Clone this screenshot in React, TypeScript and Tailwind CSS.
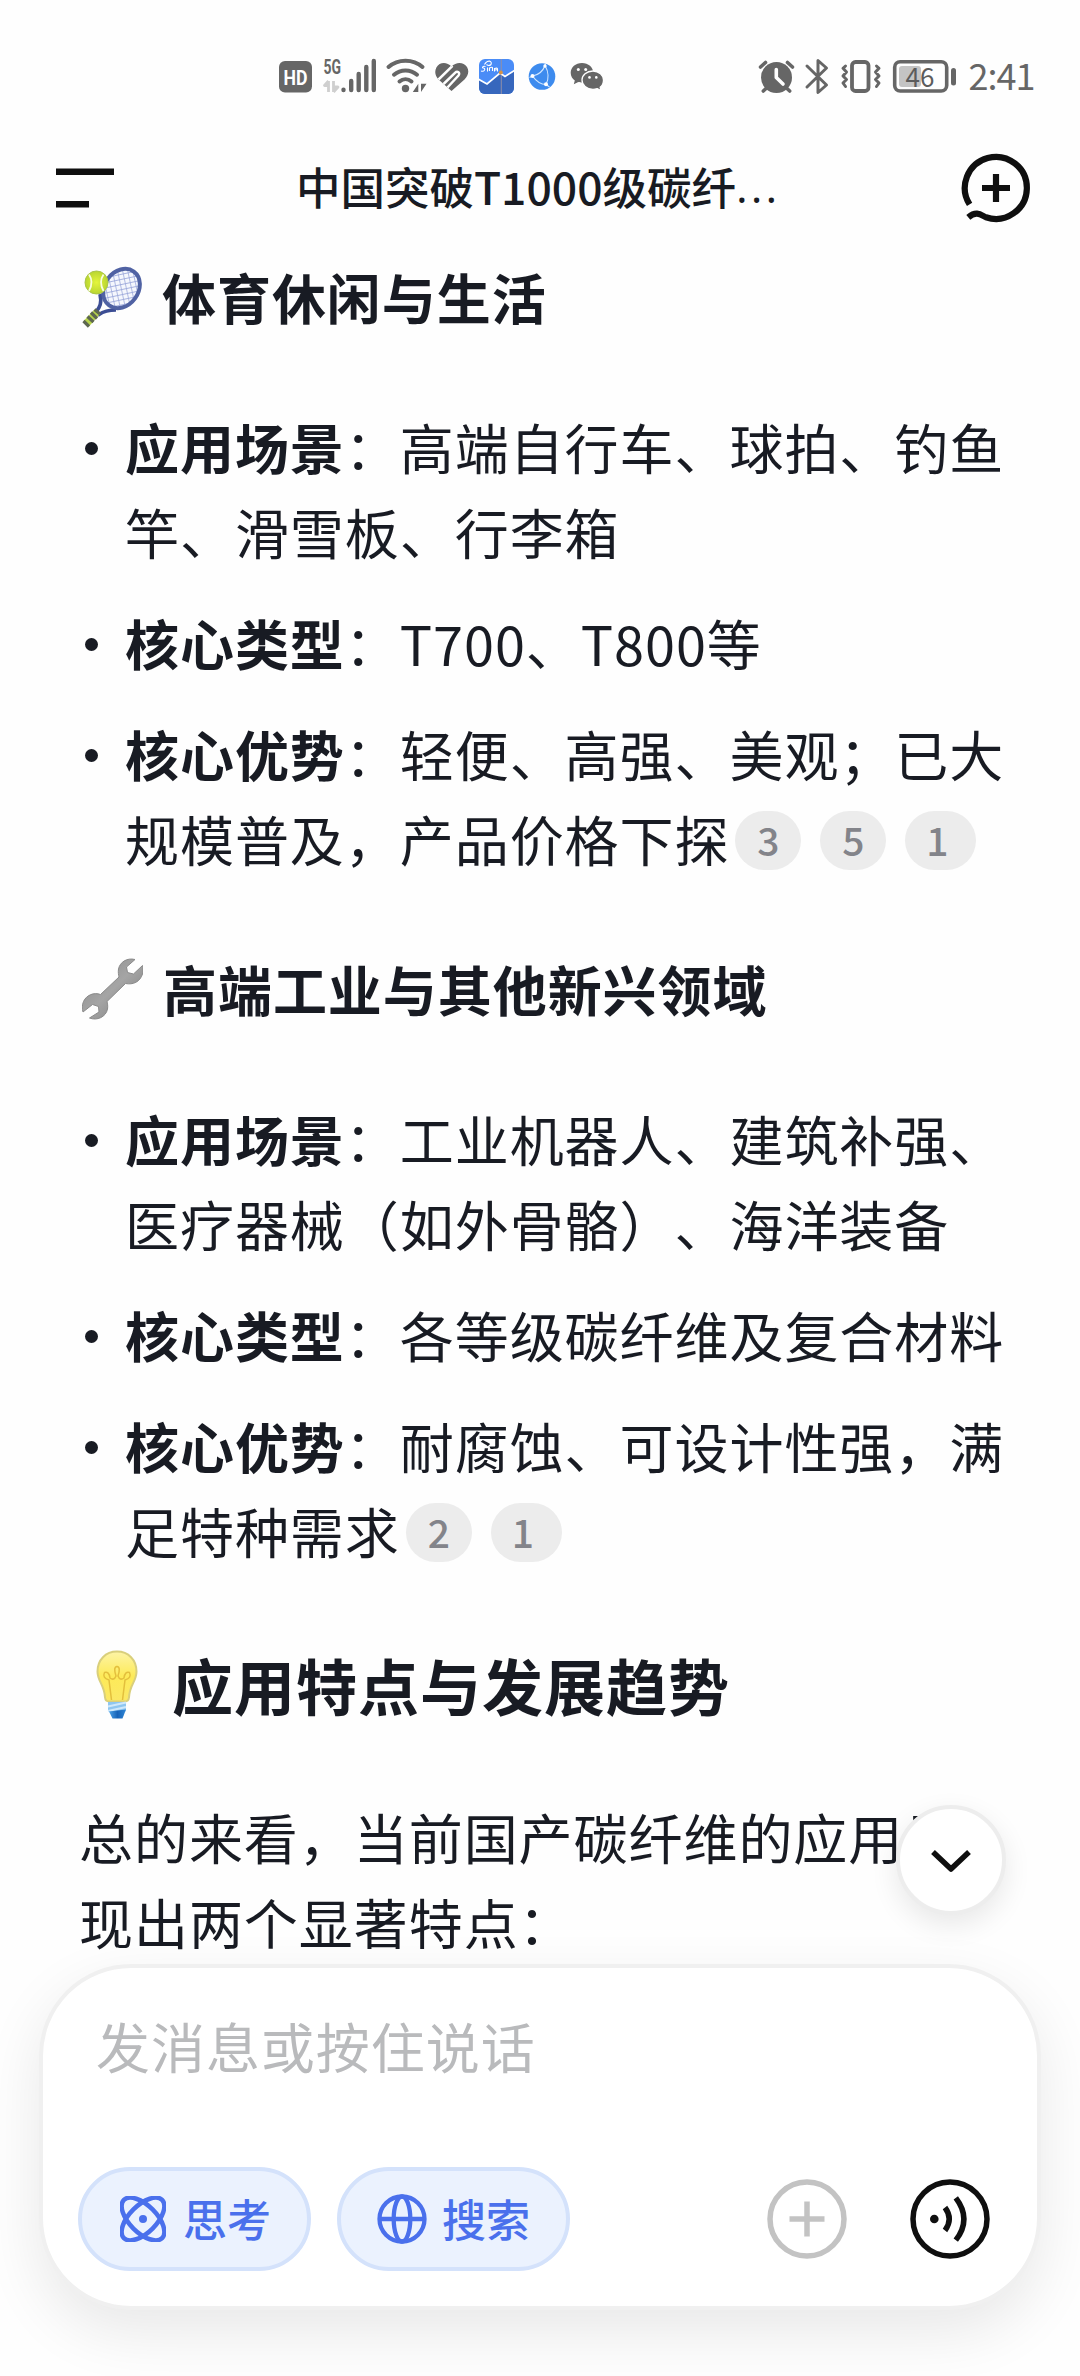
import type { ReactNode } from "react";

const G = "#666666";

function StatusBar() {
  return (
    <div className="flex h-[100px] shrink-0 items-start pt-[56px]">
      <svg className="ml-[276px] h-[42px] w-[340px] shrink-0 overflow-visible" viewBox="276 56 340 42" fill="none">
        {/* HD badge */}
        <rect x="279" y="61" width="33" height="31.5" rx="6" fill={G} />
        <text x="295.5" y="84.5" textAnchor="middle" fontSize="20.5" fontWeight="700" fill="#fff" textLength="24" lengthAdjust="spacingAndGlyphs" className="font-['Roboto',sans-serif]">HD</text>
        {/* mobile network */}
        <text x="323.500" y="74" fontSize="20.500" fontWeight="700" fill={G} textLength="17.500" lengthAdjust="spacingAndGlyphs" className="font-['Roboto',sans-serif]">5G</text>
        <path d="M328.500 81v11M328.500 81l-4 4.500h4M333.500 92V81M333.500 92l4.500-5h-4.500" stroke="#cfcfcf" strokeWidth="2.800" strokeLinejoin="round" fill="#cfcfcf" />
        <g stroke={G} strokeWidth="4.400" strokeLinecap="round">
          <path d="M343.500 89.800v.2M351.200 81v9M358.700 74v16M366.300 67v23M373.800 61v29" />
        </g>
        {/* wifi */}
        <g stroke={G} strokeWidth="4" strokeLinecap="round">
          <path d="M388.500 67C398 58.500 413 58.500 422.500 67" />
          <path d="M394 74.700C400.500 69 410.500 69 417 74.700" />
          <path d="M399.500 81.500C403 78.500 408 78.500 411.500 81.500" />
        </g>
        <circle cx="405.500" cy="88.500" r="3.700" fill={G} />
        <path d="M418.300 83.800V92H412.800ZM421 92V83.800H426.500Z" fill={G} />
        {/* health heart */}
        <clipPath id="heart">
          <path d="M451.500 66.500C447 61.500 439.500 61.800 436.500 67.200C434 72 435.500 76.200 438.500 79.500L451.500 91L464.500 79.500C468.500 75.500 469.300 71 467 67C463.500 61.500 456 61.700 451.500 66.500Z" />
        </clipPath>
        <g clipPath="url(#heart)">
          <path d="M430 58H474V96H430Z" fill={G} />
          <path d="M436.500 81.500L452.500 65.800M441.500 86L455 72.800C457.500 70.500 460.500 73 458.500 75.500L447 88" stroke="#fff" strokeWidth="2.500" />
        </g>
        {/* finance app */}
        <clipPath id="fin"><rect x="479" y="59" width="35" height="35" rx="6" /></clipPath>
        <g clipPath="url(#fin)">
          <path d="M479 59h35v35h-35z" fill="#4a8cf7" />
          <path d="M479 79.500L487 84L500 73L505 76.500L514 70V94H479Z" fill="#3767bd" />
          <path d="M501.300 59V94" stroke="#8f8fa8" strokeWidth="1" />
          <path d="M478 79L487 84L500 73L505 76.500L515 70" stroke="#fff" strokeWidth="1.700" />
          <circle cx="500.800" cy="72.500" r="2" fill="#d89445" />
          <path d="M485.500 66.500q-3-.8-3 1.300q3 .500 2 2.500q-1 1.500-3.500.7M487.500 67.500v4M489.500 71v-3q3-1.500 3 0v3M494.500 71.500v-3q3-1 3 .5v2.500M497.500 69.500q-3 0-2.800 1.500M484.500 64.500q2-3.500 5-3.500q2.500 1 1.500 3.500q-2 2-4.500 0" stroke="#fff" strokeWidth="1.100" />
        </g>
        {/* browser */}
        <circle cx="542" cy="76.500" r="13.300" fill="#3d8bee" />
        <g stroke="#cfe6ff" strokeWidth="1.200">
          <path d="M532.500 76C538 75 543 71 545 65.500M532.500 76C536 81 541 84.500 546 84.500M545 65.500C548.500 71.500 549 79 546 84.500M529.500 77.500l3-1.500M545 65.500l.5-2M546 84.500l3.500 2.500" />
        </g>
        <g fill="#fff"><circle cx="532.500" cy="76" r="2" /><circle cx="545" cy="66" r="1.700" /><circle cx="546" cy="84.200" r="2" /></g>
        {/* messenger */}
        <path d="M582 63C575.500 63 570.700 67.300 570.700 72.800C570.700 76 572.300 78.700 574.800 80.500L573.800 84.300L578.300 82C579.700 82.300 580.800 82.500 582.500 82.500C588.500 82.300 593.300 78.200 593.300 72.800C593.300 67.300 588.300 63 582 63Z" fill={G} />
        <path d="M593 71C586.500 71 582 75.300 582 80C582 85 586.500 89.300 593 89.300C594.500 89.300 596 89 597.300 88.600L601 90.500L600.200 87.200C602.500 85.500 603.500 82.800 603.500 80C603.500 75.200 599 71 593 71Z" fill={G} stroke="#fff" strokeWidth="1.300" />
        <g fill="#fff"><circle cx="578.300" cy="69.600" r="1.500" /><circle cx="585.700" cy="69.600" r="1.500" /><circle cx="589.500" cy="77.400" r="1.300" /><circle cx="596.300" cy="77.400" r="1.300" /></g>
      </svg>
      <svg className="ml-[137px] h-[42px] w-[300px] shrink-0 overflow-visible" viewBox="752 56 300 42" fill="none">
        {/* alarm */}
        <circle cx="775.500" cy="77.500" r="15.500" fill={G} />
        <path d="M759.500 67L764.500 62.500M791.500 67L786.500 62.500M765 88.500L762.300 91M786 88.500L788.700 91" stroke={G} strokeWidth="3.600" strokeLinecap="round" />
        <path d="M775.300 69.500V77.500L782 84" stroke="#fff" strokeWidth="3.600" strokeLinecap="round" strokeLinejoin="round" />
        {/* bluetooth */}
        <path d="M806 66L825.500 85L817 92.500V60.500L825.500 68L806 87" stroke={G} strokeWidth="3" strokeLinejoin="round" strokeLinecap="round" />
        {/* vibrate */}
        <rect x="851" y="62" width="16.500" height="29" rx="3.500" stroke={G} strokeWidth="3.800" />
        <path d="M844.500 66L842 68.300L845.500 72L842 76L845.500 79.500L842 83L844.500 86.500M875.500 66L878 68.300L874.500 72L878 76L874.500 79.500L878 83L875.500 86.500" stroke={G} strokeWidth="3" strokeLinejoin="round" strokeLinecap="round" />
        {/* battery */}
        <rect x="893.700" y="61.700" width="52" height="29.300" rx="5.500" stroke={G} strokeWidth="3.600" />
        <rect x="898" y="66" width="22" height="21" rx="3" fill="#c4c4c4" />
        <text x="919" y="86.500" textAnchor="middle" fontSize="26" fill="#5c5c5c" className="font-['Noto_Sans_CJK_SC',sans-serif]">46</text>
        <rect x="950" y="68" width="5" height="17.500" rx="2.500" fill={G} />
        <text x="967.500" y="90" fontSize="36" fill={G} textLength="67" lengthAdjust="spacing" className="font-['Noto_Sans_CJK_SC',sans-serif]">2:41</text>
      </svg>
    </div>
  );
}

function Header() {
  return (
    <header className="flex h-[130px] shrink-0 items-start justify-between pl-[56px] pr-[50px] pt-[54px]">
      <svg className="mt-[14px] h-[40px] w-[58px]" viewBox="0 0 58 40" fill="#0f0f0f">
        <path d="M0 0.500H58V7H0ZM0 33H33V39.500H0Z" />
      </svg>
      <h1 className="mt-[-2px] flex h-[68px] items-center text-[44.500px] font-medium leading-[68px] text-[#181b23]">
        <span>中国突破T1000级碳纤</span>
        <span className="font-['Open_Sans','Noto_Sans',sans-serif] tracking-[3px]">...</span>
      </h1>
      <svg className="h-[70px] w-[68px] overflow-visible" viewBox="962 154 68 70" fill="none" stroke="#0f0f0f" strokeWidth="6.200">
        <path d="M969.600 204.400A31 31 0 1 1 986 217.300C981 215 976.500 210.500 968.300 217.300" />
        <path d="M982 188H1010M996 174V202" />
      </svg>
    </header>
  );
}

function Racket() {
  return (
    <svg className="h-[62px] w-[60px] shrink-0" viewBox="0 0 60 62" fill="none">
      <defs>
        <pattern id="net" width="5" height="5" patternUnits="userSpaceOnUse" patternTransform="rotate(42)">
          <path d="M0 0H5V5H0Z" fill="#f5f7fd" />
          <path d="M0 0H5M0 0V5" stroke="#9aa6da" strokeWidth="1.700" />
        </pattern>
        <radialGradient id="ball"><stop stopColor="#e4f53c" /><stop offset="1" stopColor="#b9d531" /></radialGradient>
      </defs>
      <path d="M18 28C20 37 18 41 14 46L17 48.500C22 45 27 44 34 44" stroke="#3b4d94" strokeWidth="3.600" />
      <ellipse cx="39.500" cy="22.500" rx="16.800" ry="21" transform="rotate(36 39.500 22.500)" fill="url(#net)" stroke="#5062a3" strokeWidth="4" />
      <path d="M1.500 55L12.500 43.500L18 48L7 60.500Z" fill="#b7d44c" />
      <path d="M1.500 55L7 60.500M5.500 50.500L11.500 56M9 46.500L15 52.500M12.500 43.500L18 48" stroke="#5d6650" strokeWidth="3.200" />
      <circle cx="14.500" cy="16.500" r="11.500" fill="url(#ball)" stroke="#aac44a" strokeWidth="1" />
      <path d="M7 8.500Q12 16 7 25M21.500 8.500Q16.500 16 21.500 25" stroke="#f8fde0" strokeWidth="1.800" />
    </svg>
  );
}

function Wrench() {
  return (
    <svg className="h-[62px] w-[61px] shrink-0" viewBox="0 0 61 62">
      <defs><linearGradient id="steel" x1="0" y1="0" x2="1" y2="1"><stop stopColor="#858585" /><stop offset=".5" stopColor="#a5a5a5" /><stop offset="1" stopColor="#777" /></linearGradient></defs>
      <path d="M53 1.500C45 -.5 38 4 36.500 11C36 14 36.500 17 37 19L18.500 36.500C12 34 4.500 37 1.500 43.500C0 47 0 51 1 54L10.500 46.500L16.500 48.500L17 54L7.500 60C15 63 24 59 25.500 51C26 48 25.500 45.500 25 43.500L43.500 25.500C51 27 58 24 60.500 16C61.500 12.500 61 9.500 60.500 7.500L51.500 16L45.500 14.500L44.500 9Z" fill="url(#steel)" stroke="#8a8a8a" strokeWidth="1" strokeLinejoin="round" />
    </svg>
  );
}

function Bulb() {
  return (
    <svg className="h-[70px] w-[42px] shrink-0" viewBox="0 0 42 70" fill="none">
      <defs>
        <linearGradient id="glass" x1="0" y1="0" x2="0" y2="1"><stop stopColor="#fdf4a6" /><stop offset=".5" stopColor="#fdea58" /><stop offset="1" stopColor="#fbe866" /></linearGradient>
        <linearGradient id="cap" x1="0" y1="0" x2="1" y2="0"><stop stopColor="#4aa0e6" /><stop offset=".5" stopColor="#1763b8" /><stop offset="1" stopColor="#2f86d6" /></linearGradient>
      </defs>
      <path d="M21 1.500C9.500 1.500 1.500 10 1.500 21.500C1.500 31.500 8.500 35 9 47.500Q9.500 51.500 13 51.500H29Q32.500 51.500 33 47.500C33.500 35 40.500 31.500 40.500 21.500C40.500 10 32.500 1.500 21 1.500Z" fill="url(#glass)" stroke="#d9cf7c" strokeWidth="2" />
      <path d="M15.500 50L13 30Q6 28 8.500 22.500Q13 21 14 28Q18 31 20 26Q17 17 21 16.500Q25 17 22 26Q24 31 28 28Q29 21 33.500 22.500Q36 28 29 30L26.500 50" stroke="#e3bf3c" strokeWidth="1.500" />
      <path d="M12 52H30V59.500L29 62H13L12 59.500Z" fill="#8fc6f0" />
      <path d="M12 56.500L30 52.500M12 61L30 57" stroke="#cfe8fb" strokeWidth="2" />
      <path d="M13 61.500L30 59.500L26.500 68.500H16.500Z" fill="url(#cap)" />
    </svg>
  );
}

function Cite({ n, wide }: { n: number; wide?: boolean }) {
  return (
    <span className={`${wide ? "w-[71px] pr-[7px]" : "w-[66px]"} inline-flex h-[59px] items-center justify-center rounded-full bg-[#ececec] text-[39px] font-medium leading-[59px] tracking-normal text-[#83848a]`}>
      <span className="relative top-[-1px]">{n}</span>
    </span>
  );
}

function Cites({ ids }: { ids: number[] }) {
  return (
    <span className="ml-[6px] inline-flex h-[59px] gap-[19px] align-[5px]">
      {ids.map((n, i) => <Cite key={n} n={n} wide={i === ids.length - 1} />)}
    </span>
  );
}

function Item({ label, children }: { label: string; children: ReactNode }) {
  return (
    <li className="flex">
      <span className="ml-[6px] mt-[38px] h-[13px] w-[13px] shrink-0 rounded-full bg-[#181b23]" />
      <p className="ml-[27px] flex-1"><b className="font-bold">{label}</b>：{children}</p>
    </li>
  );
}

function SubHeading({ icon, children }: { icon: ReactNode; children: ReactNode }) {
  return (
    <h3 className="flex h-[85px] items-center pl-[3px] font-bold">
      {icon}
      <span className="ml-[20px]">{children}</span>
    </h3>
  );
}

function Composer() {
  return (
    <section className="absolute left-[39px] top-[1964px] flex h-[346px] w-[1002px] flex-col rounded-[92px] border-4 border-[#f0f0f0] bg-white bg-clip-padding shadow-[0_22px_60px_rgba(0,0,0,0.09)]">
      <p className="ml-[53px] mt-[35px] h-[85px] text-[54px] leading-[85px] tracking-[0.95px] text-[#b9babc]">发消息或按住说话</p>
      <div className="mt-[79px] flex items-center pl-[35px]">
        <button className="flex h-[104px] w-[233px] items-center rounded-full border-4 border-[#d4e2fb] bg-[#ebf2fe] pl-[38px] text-[44px] font-medium leading-[60px] text-[#4a70ec]">
          <svg className="h-[46px] w-[46px]" viewBox="0 0 46 46" fill="none" stroke="#4a70ec" strokeWidth="4.500">
            <ellipse cx="23" cy="23" rx="27" ry="13.500" transform="rotate(45 23 23)" />
            <ellipse cx="23" cy="23" rx="27" ry="13.500" transform="rotate(-45 23 23)" />
            <circle cx="23" cy="23" r="4" fill="#4a70ec" stroke="none" />
          </svg>
          <span className="relative top-[-1px] ml-[17px]">思考</span>
        </button>
        <button className="ml-[26px] flex h-[104px] w-[233px] items-center rounded-full border-4 border-[#d4e2fb] bg-[#ebf2fe] pl-[36px] text-[44px] font-medium leading-[60px] text-[#4a70ec]">
          <svg className="h-[50px] w-[50px]" viewBox="0 0 50 50" fill="none" stroke="#4a70ec" strokeWidth="4.300">
            <circle cx="25" cy="25" r="22.500" />
            <ellipse cx="25" cy="25" rx="8.300" ry="22.500" />
            <path d="M2.500 25H47.500" />
          </svg>
          <span className="relative top-[-1px] ml-[15px]">搜索</span>
        </button>
        <svg className="ml-[197px] h-[80px] w-[80px]" viewBox="0 0 80 80" fill="none" stroke="#c3c3c3" strokeWidth="5.500">
          <circle cx="40" cy="40" r="37" />
          <path d="M22.500 40H57.500M40 22.500V57.500" />
        </svg>
        <svg className="ml-[63px] h-[80px] w-[80px]" viewBox="0 0 80 80" fill="none" stroke="#0f0f0f" strokeWidth="5.500">
          <circle cx="40" cy="40" r="37" />
          <circle cx="24.300" cy="40" r="4.300" fill="#0f0f0f" stroke="none" />
          <path d="M35 28.500Q43.500 40 35 51.500M45.800 18.800Q62 40 45.800 61.200" />
        </svg>
      </div>
    </section>
  );
}

export default function App() {
  return (
    <div className="relative flex h-[2376px] w-[1080px] flex-col overflow-hidden bg-[#fefefe] font-['Noto_Sans_CJK_SC',sans-serif] text-[#181b23]">
      <StatusBar />
      <Header />
      <main className="flex flex-col pl-[79px] pr-[72px] pt-[24px] text-[54px] leading-[85px] tracking-[0.95px] [text-spacing-trim:space-all]">
        <SubHeading icon={<Racket />}>体育休闲与生活</SubHeading>
        <ul className="mt-[65px] flex flex-col gap-[26px]">
          <Item label="应用场景">高端自行车、球拍、钓鱼竿、滑雪板、行李箱</Item>
          <Item label="核心类型">T700、T800等</Item>
          <Item label="核心优势">轻便、高强、美观；已大规模普及，产品价格下探<Cites ids={[3, 5, 1]} /></Item>
        </ul>
        <div className="mt-[65px]"><SubHeading icon={<Wrench />}>高端工业与其他新兴领域</SubHeading></div>
        <ul className="mt-[65px] flex flex-col gap-[26px]">
          <Item label="应用场景">工业机器人、建筑补强、医疗器械（如外骨骼）、海洋装备</Item>
          <Item label="核心类型">各等级碳纤维及复合材料</Item>
          <Item label="核心优势">耐腐蚀、可设计性强，满足特种需求<Cites ids={[2, 1]} /></Item>
        </ul>
        <h2 className="mt-[69px] flex h-[85px] items-center pl-[17px] text-[61px] font-bold tracking-[1px]">
          <Bulb />
          <span className="ml-[34px]">应用特点与发展趋势</span>
        </h2>
        <p className="mt-[67px]">总的来看，当前国产碳纤维的应用呈现出两个显著特点：</p>
      </main>
      <button className="absolute left-[896px] top-[1805px] flex h-[110px] w-[110px] items-center justify-center rounded-full border-4 border-[#ededed] bg-white shadow-[0_10px_28px_rgba(0,0,0,0.09)]">
        <svg className="h-[24px] w-[44px]" viewBox="0 0 44 24" fill="none" stroke="#0f0f0f" strokeWidth="5.500" strokeLinejoin="round">
          <path d="M4 4L22 21L40 4" />
        </svg>
      </button>
      <Composer />
    </div>
  );
}
